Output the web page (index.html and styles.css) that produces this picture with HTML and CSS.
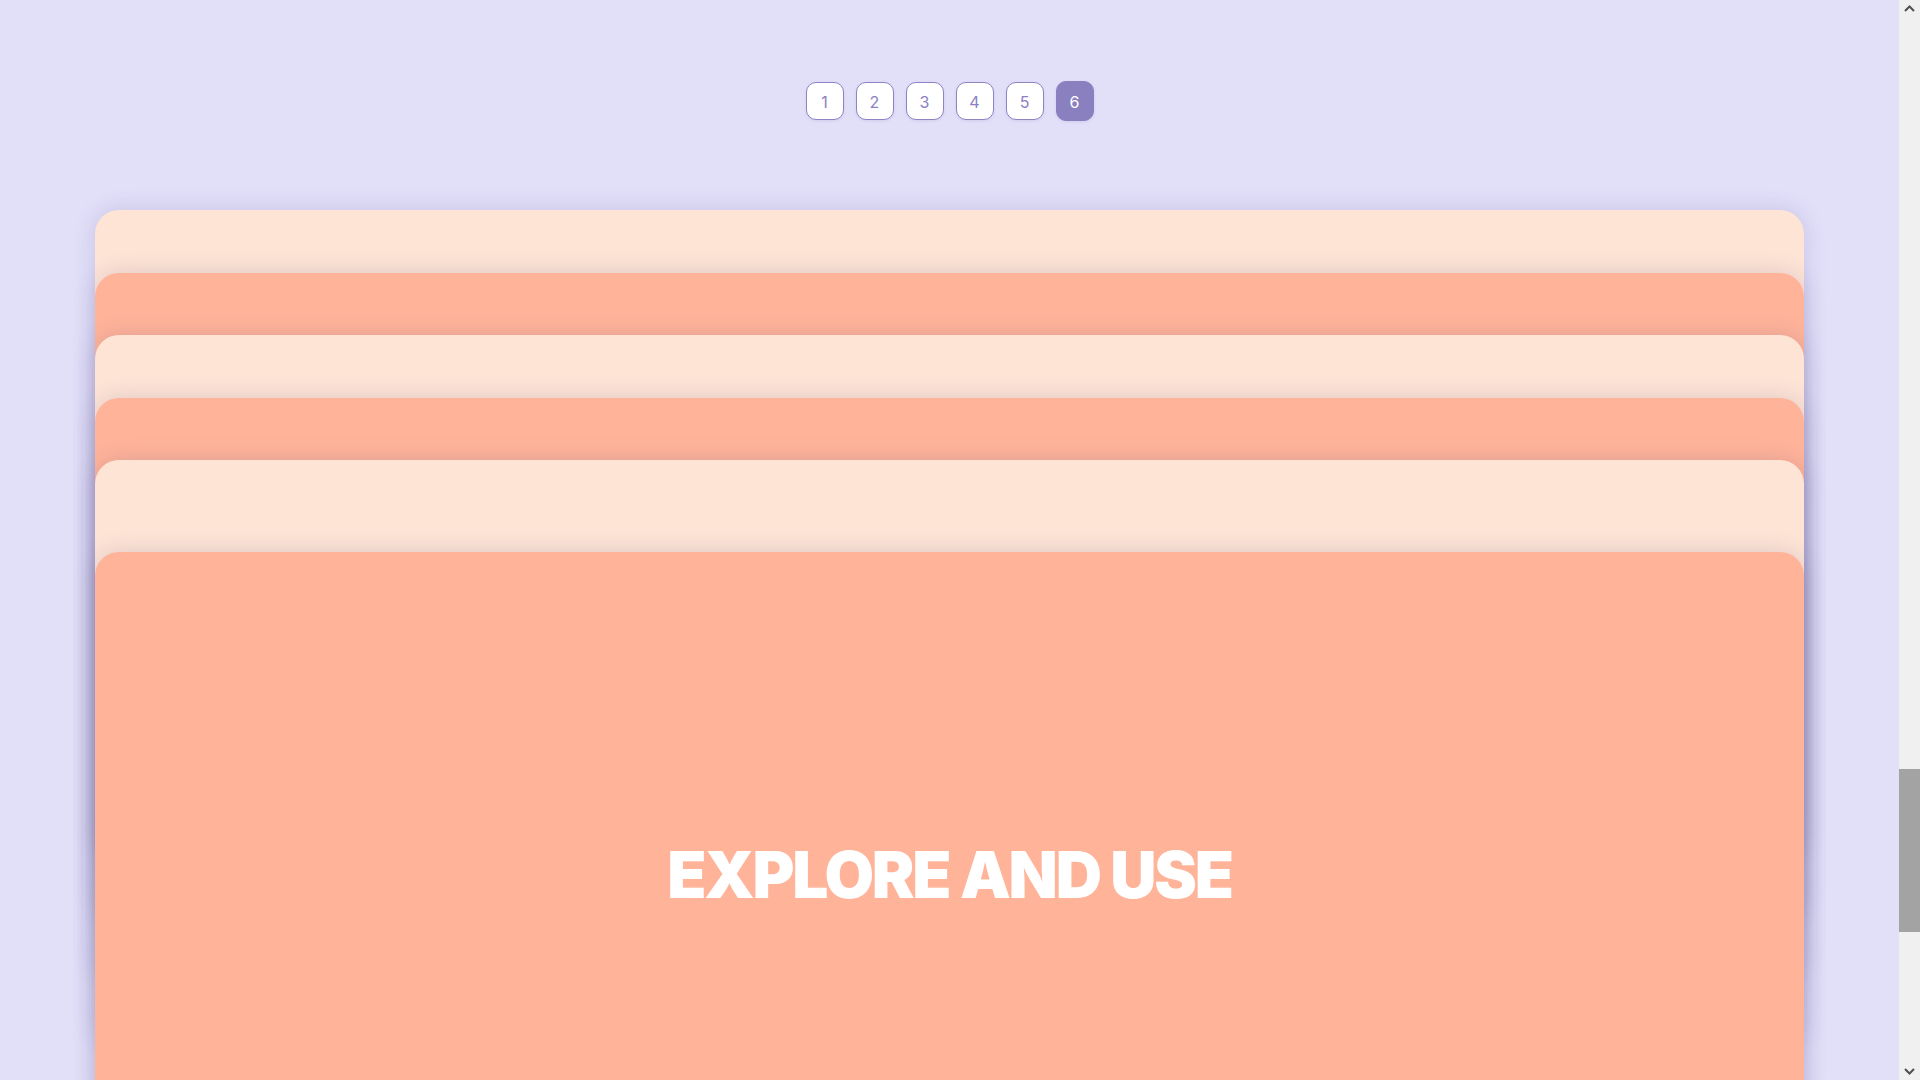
FILE: index.html
```html
<!DOCTYPE html>
<html lang="en">
<head>
<meta charset="utf-8">
<title>Stacked cards</title>
<link rel="stylesheet" href="styles.css">
</head>
<body>
<div class="page">
  <div class="content">
    <header class="pager">
      <nav class="pager-nav">
        <button class="page-btn">1</button>
        <button class="page-btn">2</button>
        <button class="page-btn">3</button>
        <button class="page-btn">4</button>
        <button class="page-btn">5</button>
        <button class="page-btn active">6</button>
      </nav>
    </header>
    <main class="cards">
      <section class="card card-light"></section>
      <section class="card card-salmon"></section>
      <section class="card card-light"></section>
      <section class="card card-salmon"></section>
      <section class="card card-light"></section>
      <section class="card card-salmon card-last"><h2 class="card-title">EXPLORE AND USE</h2></section>
    </main>
  </div>
  <aside class="scrollbar" aria-hidden="true">
    <span class="sb-arrow">
      <svg width="11" height="7" viewBox="0 0 11 7"><path d="M1 6 L5.5 1.5 L10 6" fill="none" stroke="#505050" stroke-width="2"/></svg>
    </span>
    <div class="sb-track">
      <div class="sb-space-top"></div>
      <div class="sb-thumb"></div>
    </div>
    <span class="sb-arrow">
      <svg width="11" height="7" viewBox="0 0 11 7"><path d="M1 1 L5.5 5.5 L10 1" fill="none" stroke="#505050" stroke-width="2"/></svg>
    </span>
  </aside>
</div>
</body>
</html>
```
FILE: styles.css
```css
html, body {
  margin: 0;
  height: 1080px;
  overflow: hidden;
}
body {
  background: #e2dff9;
  font-family: "Inter", "Liberation Sans", sans-serif;
}
.page {
  display: flex;
  height: 1080px;
}
.content {
  flex: 1;
  min-width: 0;
  overflow: hidden;
}
.pager {
  height: 210px;
  box-sizing: border-box;
  padding-top: 82px;
}
.pager-nav {
  display: flex;
  justify-content: center;
  gap: 12px;
}
.page-btn {
  width: 38px;
  height: 38px;
  box-sizing: border-box;
  border: 1px solid #8e84c4;
  border-radius: 10px;
  background: #ffffff;
  color: #8a80c2;
  font-family: "Inter", "Liberation Sans", sans-serif;
  font-size: 16px;
  font-weight: 400;
  padding: 1px 0 0;
  display: flex;
  align-items: center;
  justify-content: center;
  box-shadow: 0 1px 3px rgba(90, 70, 150, 0.12);
}
.page-btn.active {
  background: #8a80bf;
  border-color: #8a80bf;
  color: #ffffff;
  height: 40px;
  margin-top: -1px;
}
.cards {
  width: 90%;
  margin: 0 auto;
  display: flex;
  flex-direction: column;
}
.card {
  height: 646px;
  flex-shrink: 0;
  border-radius: 24px;
  box-shadow: 0 0 22px rgba(80, 65, 130, 0.18);
  display: flex;
  align-items: center;
  justify-content: center;
}
.card + .card {
  margin-top: -583.5px;
}
.card + .card.card-last {
  margin-top: -554px;
}
.card-light {
  background: #fee4d5;
}
.card-salmon {
  background: #ffb399;
}
.card-title {
  margin: 0;
  color: #ffffff;
  font-family: "Inter", "Liberation Sans", sans-serif;
  font-weight: 900;
  font-size: 64px;
  letter-spacing: -2.2px;
  line-height: 1;
}
.scrollbar {
  width: 21px;
  flex-shrink: 0;
  background: #f0f0f0;
  display: flex;
  flex-direction: column;
}
.sb-arrow {
  height: 17px;
  display: flex;
  align-items: center;
  justify-content: center;
  flex-shrink: 0;
}
.sb-track {
  flex: 1;
  display: flex;
  flex-direction: column;
}
.sb-space-top {
  height: 752px;
}
.sb-thumb {
  height: 163px;
  background: #a3a3a3;
}
```
